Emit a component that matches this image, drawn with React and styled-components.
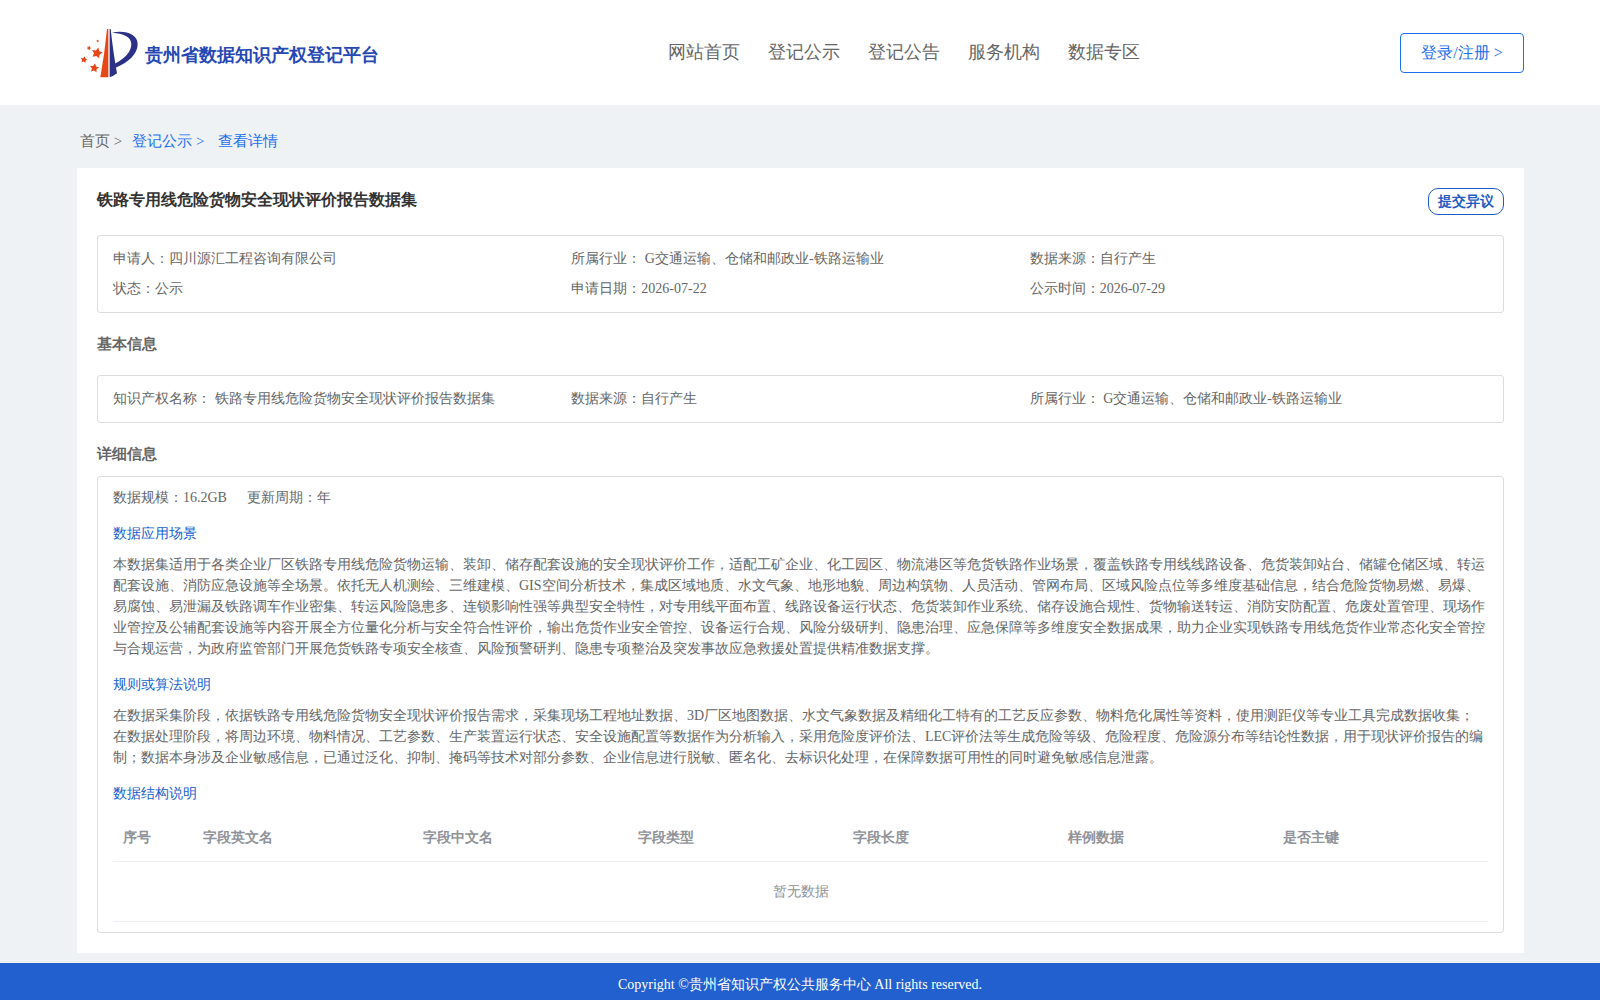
import React from "react";
import styled, { createGlobalStyle } from "styled-components";

const GlobalStyle = createGlobalStyle`
  * {
    box-sizing: border-box;
  }
  body {
    margin: 0;
    background: #eef2f5;
    color: #666;
    font-family: "Liberation Serif", serif;
    font-size: 14px;
    line-height: 20px;
  }
  h1, h2, h3, p, dl, dd {
    margin: 0;
  }
  a {
    color: inherit;
    text-decoration: none;
  }
  button {
    font-family: inherit;
    cursor: pointer;
  }
`;

const Header = styled.header`
  display: flex;
  align-items: center;
  justify-content: space-between;
  height: 105px;
  padding: 0 76px 0 80px;
  background: #fff;
`;

const Brand = styled.a`
  display: flex;
  align-items: center;
  gap: 7px;
  color: #2648b4;
  font-size: 18px;
  font-weight: bold;
  line-height: 24px;
`;

const BrandName = styled.span`
  padding-top: 4px;
`;

const Nav = styled.nav`
  display: flex;
  gap: 28px;
  margin-left: 28px;
  padding-bottom: 2px;
  font-size: 18px;
  line-height: 24px;
`;

const LoginButton = styled.button`
  width: 124px;
  height: 40px;
  padding: 2px 0 0;
  border: 1px solid #1c70ee;
  border-radius: 4px;
  background: #fff;
  color: #1c70ee;
  font-size: 16px;
`;

const Main = styled.main`
  padding: 24px 76px 10px 77px;
`;

const Breadcrumb = styled.nav`
  display: flex;
  height: 39px;
  padding-left: 3px;
  font-size: 15px;
  line-height: 24px;
`;

const Crumb = styled.a`
  margin-right: ${(p) => p.$gap || 0}px;
  color: ${(p) => (p.$active ? "#1c70ee" : "#666")};
`;

const Card = styled.article`
  padding: 20px;
  background: #fff;
`;

const CardHead = styled.div`
  display: flex;
  align-items: flex-start;
  justify-content: space-between;
  height: 47px;
`;

const Title = styled.h1`
  color: #333;
  font-size: 16px;
  line-height: 24px;
`;

const ObjectionButton = styled.button`
  width: 76px;
  height: 27px;
  padding: 0;
  border: 1px solid #1f5bc4;
  border-radius: 10px;
  background: #fff;
  color: #1f5bc4;
  font-size: 14px;
  font-weight: bold;
`;

const SectionTitle = styled.h2`
  padding: ${(p) => (p.$tight ? "21px 0 12px" : "21px 0")};
  font-size: 15px;
  line-height: 20px;
`;

const Panel = styled.section`
  padding: ${(p) => (p.$detail ? "11px 15px 10px" : "13px 15px")};
  border: 1px solid #dcdddd;
  border-radius: 3px;
`;

const InfoGrid = styled.dl`
  display: grid;
  grid-template-columns: repeat(3, 1fr);
  row-gap: 10px;
`;

const InfoItem = styled.div`
  display: flex;
  white-space: pre;
`;

const InlineInfo = styled.dl`
  display: flex;
  gap: 20px;
`;

const DetailTitle = styled.h3`
  padding-top: 16px;
  color: #205fcf;
  font-size: 14px;
  font-weight: normal;
  line-height: 20px;
`;

const Paragraph = styled.p`
  padding-top: 10px;
  line-height: 21px;
`;

const Table = styled.table`
  width: 100%;
  margin-top: 10px;
  border-collapse: separate;
  border-spacing: 0;
  table-layout: fixed;
  color: #909399;
`;

const HeadCell = styled.th`
  width: ${(p) => (p.$width ? `${p.$width}px` : "auto")};
  height: 48px;
  padding: 0 10px;
  border-bottom: 1px solid #ebeef5;
  text-align: left;
`;

const EmptyCell = styled.td`
  height: 60px;
  padding: 0;
  border-bottom: 1px solid #ebeef5;
  text-align: center;
`;

const Footer = styled.footer`
  padding: 12px 0 5px;
  background: #2260cf;
  color: #fff;
  text-align: center;
`;

const NAV_ITEMS = ["网站首页", "登记公示", "登记公告", "服务机构", "数据专区"];

const SUMMARY = [
  ["申请人：", "四川源汇工程咨询有限公司"],
  ["所属行业： ", "G交通运输、仓储和邮政业-铁路运输业"],
  ["数据来源：", "自行产生"],
  ["状态：", "公示"],
  ["申请日期：", "2026-07-22"],
  ["公示时间：", "2026-07-29"],
];

const BASIC = [
  ["知识产权名称： ", "铁路专用线危险货物安全现状评价报告数据集"],
  ["数据来源：", "自行产生"],
  ["所属行业： ", "G交通运输、仓储和邮政业-铁路运输业"],
];

const SCALE = [
  ["数据规模：", "16.2GB"],
  ["更新周期：", "年"],
];

const COLUMNS = [
  { name: "序号", width: 80 },
  { name: "字段英文名", width: 220 },
  { name: "字段中文名" },
  { name: "字段类型" },
  { name: "字段长度" },
  { name: "样例数据" },
  { name: "是否主键" },
];

const SCENARIO =
  "本数据集适用于各类企业厂区铁路专用线危险货物运输、装卸、储存配套设施的安全现状评价工作，适配工矿企业、化工园区、物流港区等危货铁路作业场景，覆盖铁路专用线线路设备、危货装卸站台、储罐仓储区域、转运配套设施、消防应急设施等全场景。依托无人机测绘、三维建模、GIS空间分析技术，集成区域地质、水文气象、地形地貌、周边构筑物、人员活动、管网布局、区域风险点位等多维度基础信息，结合危险货物易燃、易爆、易腐蚀、易泄漏及铁路调车作业密集、转运风险隐患多、连锁影响性强等典型安全特性，对专用线平面布置、线路设备运行状态、危货装卸作业系统、储存设施合规性、货物输送转运、消防安防配置、危废处置管理、现场作业管控及公辅配套设施等内容开展全方位量化分析与安全符合性评价，输出危货作业安全管控、设备运行合规、风险分级研判、隐患治理、应急保障等多维度安全数据成果，助力企业实现铁路专用线危货作业常态化安全管控与合规运营，为政府监管部门开展危货铁路专项安全核查、风险预警研判、隐患专项整治及突发事故应急救援处置提供精准数据支撑。";

const ALGORITHM =
  "在数据采集阶段，依据铁路专用线危险货物安全现状评价报告需求，采集现场工程地址数据、3D厂区地图数据、水文气象数据及精细化工特有的工艺反应参数、物料危化属性等资料，使用测距仪等专业工具完成数据收集；在数据处理阶段，将周边环境、物料情况、工艺参数、生产装置运行状态、安全设施配置等数据作为分析输入，采用危险度评价法、LEC评价法等生成危险等级、危险程度、危险源分布等结论性数据，用于现状评价报告的编制；数据本身涉及企业敏感信息，已通过泛化、抑制、掩码等技术对部分参数、企业信息进行脱敏、匿名化、去标识化处理，在保障数据可用性的同时避免敏感信息泄露。";

const STAR = "M0,-10 L3.2,-3.8 L9.6,-3.1 L5,1.8 L5.9,8.3 L0,5.4 L-5.9,8.3 L-5,1.8 L-9.6,-3.1 L-3.2,-3.8 Z";

function Logo() {
  return (
    <svg width="58" height="50" viewBox="60 54 174 150" aria-hidden="true">
      <path d="M141,57 L145,57 L145,202 L121,202 Q134,130 141,57 Z" fill="#e64716" />
      <path d="M149,57 L152,57 Q160,130 171,190 Q161,198 149,202 Z" fill="#2a3187" />
      <path
        d="M156,68 C196,60 233,72 233,103 C233,132 205,158 167,173 L164,161 C195,146 214,125 214,102 C214,80 190,70 156,68 Z"
        fill="#2a3187"
      />
      <g fill="#e64716">
        <path d={STAR} transform="translate(111 129) rotate(14) scale(1.7)" />
        <path d={STAR} transform="translate(103 174) rotate(8) scale(1.4)" />
        <path d={STAR} transform="translate(72 149) rotate(10) scale(1.05)" />
        <path d={STAR} transform="translate(87 114) rotate(20) scale(0.7)" />
        <path d={STAR} transform="translate(113 93) scale(0.45)" />
      </g>
    </svg>
  );
}

function Items({ items }) {
  return items.map(([label, value]) => (
    <InfoItem key={label}>
      <dt>{label}</dt>
      <dd>{value}</dd>
    </InfoItem>
  ));
}

export default function App() {
  return (
    <>
      <GlobalStyle />
      <Header>
        <Brand href="#">
          <Logo />
          <BrandName>贵州省数据知识产权登记平台</BrandName>
        </Brand>
        <Nav>
          {NAV_ITEMS.map((item) => (
            <a href="#" key={item}>{item}</a>
          ))}
        </Nav>
        <LoginButton type="button">登录/注册 &gt;</LoginButton>
      </Header>
      <Main>
        <Breadcrumb>
          <Crumb href="#" $gap={10}>首页 &gt;</Crumb>
          <Crumb href="#" $gap={14} $active>登记公示 &gt;</Crumb>
          <Crumb href="#" $active>查看详情</Crumb>
        </Breadcrumb>
        <Card>
          <CardHead>
            <Title>铁路专用线危险货物安全现状评价报告数据集</Title>
            <ObjectionButton type="button">提交异议</ObjectionButton>
          </CardHead>
          <Panel>
            <InfoGrid><Items items={SUMMARY} /></InfoGrid>
          </Panel>
          <SectionTitle>基本信息</SectionTitle>
          <Panel>
            <InfoGrid><Items items={BASIC} /></InfoGrid>
          </Panel>
          <SectionTitle $tight>详细信息</SectionTitle>
          <Panel $detail>
            <InlineInfo><Items items={SCALE} /></InlineInfo>
            <DetailTitle>数据应用场景</DetailTitle>
            <Paragraph>{SCENARIO}</Paragraph>
            <DetailTitle>规则或算法说明</DetailTitle>
            <Paragraph>{ALGORITHM}</Paragraph>
            <DetailTitle>数据结构说明</DetailTitle>
            <Table>
              <thead>
                <tr>
                  {COLUMNS.map((c) => (
                    <HeadCell key={c.name} scope="col" $width={c.width}>{c.name}</HeadCell>
                  ))}
                </tr>
              </thead>
              <tbody>
                <tr>
                  <EmptyCell colSpan={COLUMNS.length}>暂无数据</EmptyCell>
                </tr>
              </tbody>
            </Table>
          </Panel>
        </Card>
      </Main>
      <Footer>Copyright ©贵州省知识产权公共服务中心 All rights reserved.</Footer>
    </>
  );
}
